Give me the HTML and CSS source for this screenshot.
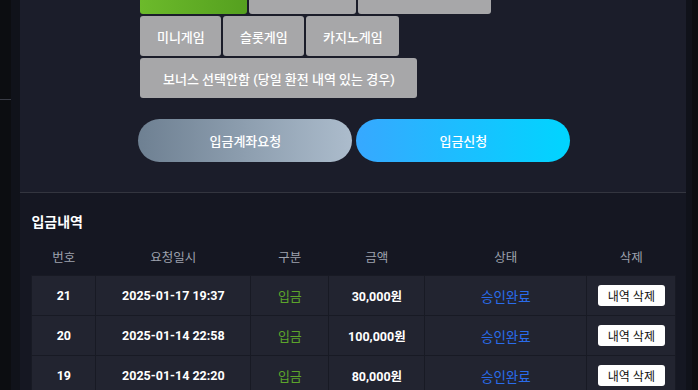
FILE: index.html
```html
<!DOCTYPE html>
<html lang="ko">
<head>
    <meta charset="UTF-8">
    <meta name="viewport" content="width=device-width, initial-scale=1.0">
    <title>입금신청</title>
    <link rel="stylesheet" href="styles.css">
</head>
<body>
<div class="layout">
    <div class="sidebar"><div class="sidebar-line"></div></div>
    <div class="gutter"></div>

    <div class="main">
        <!-- 입금 신청 폼 -->
        <div class="deposit-form">
            <div class="game-buttons">
                <div class="btn-row top">
                    <button class="game-btn active" style="width: 107px;">스포츠 (국내)</button>
                    <button class="game-btn" style="width: 107px;">스포츠 (해외)</button>
                    <button class="game-btn" style="width: 133px;">실시간 (라이브)</button>
                </div>
                <div class="btn-row">
                    <button class="game-btn" style="width: 81px;">미니게임</button>
                    <button class="game-btn" style="width: 81px;">슬롯게임</button>
                    <button class="game-btn" style="width: 93px;">카지노게임</button>
                </div>
                <div class="btn-row">
                    <button class="game-btn" style="width: 277px;">보너스 선택안함 (당일 환전 내역 있는 경우)</button>
                </div>
            </div>

            <div class="action-buttons">
                <button class="action-btn account">입금계좌요청</button>
                <button class="action-btn apply">입금신청</button>
            </div>
        </div>

        <!-- 입금 내역 -->
        <div class="history">
            <h3>입금내역</h3>
            <table class="history-table">
                <colgroup>
                    <col style="width: 64px;">
                    <col style="width: 155px;">
                    <col style="width: 78px;">
                    <col style="width: 96px;">
                    <col style="width: 162px;">
                    <col style="width: 89px;">
                </colgroup>
                <thead>
                    <tr>
                        <th>번호</th>
                        <th>요청일시</th>
                        <th>구분</th>
                        <th>금액</th>
                        <th>상태</th>
                        <th>삭제</th>
                    </tr>
                </thead>
                <tbody>
                    <tr>
                        <td class="num">21</td>
                        <td class="num">2025-01-17 19:37</td>
                        <td class="type">입금</td>
                        <td class="num">30,000원</td>
                        <td class="status">승인완료</td>
                        <td><button class="del-btn">내역 삭제</button></td>
                    </tr>
                    <tr>
                        <td class="num">20</td>
                        <td class="num">2025-01-14 22:58</td>
                        <td class="type">입금</td>
                        <td class="num">100,000원</td>
                        <td class="status">승인완료</td>
                        <td><button class="del-btn">내역 삭제</button></td>
                    </tr>
                    <tr>
                        <td class="num">19</td>
                        <td class="num">2025-01-14 22:20</td>
                        <td class="type">입금</td>
                        <td class="num">80,000원</td>
                        <td class="status">승인완료</td>
                        <td><button class="del-btn">내역 삭제</button></td>
                    </tr>
                </tbody>
            </table>
        </div>
    </div>

    <div class="rightbar"></div>
</div>
</body>
</html>
```

FILE: styles.css
```css
body {
    margin: 0;
    background-color: #0c0d11;
    font-family: Roboto, "Noto Sans CJK KR", sans-serif;
    color: #fff;
    overflow: hidden;
}
.layout {
    display: flex;
    min-height: 390px;
}
.sidebar {
    width: 11px;
    background-color: #0c0d11;
}
.sidebar-line {
    height: 1px;
    margin-top: 99px;
    background-color: #3a3c46;
}
.gutter {
    width: 10px;
    background-color: #10121a;
}
.main {
    flex: 1;
    background-color: #151722;
}
.rightbar {
    width: 12px;
    background: linear-gradient(to right, #10121a 50%, #0c0d11 50%);
}

/* 입금 신청 폼 */
.deposit-form {
    background-color: #1b1d2a;
    border-bottom: 1px solid #33353f;
    margin-top: -26px;
    padding-bottom: 30px;
}
.game-buttons {
    padding-left: 120px;
}
.btn-row {
    display: flex;
    gap: 2px;
    margin-bottom: 2px;
}
.btn-row:last-child {
    margin-bottom: 0;
}
.game-btn {
    height: 40px;
    padding: 0;
    border: none;
    border-radius: 3px;
    background-color: #a7a7a9;
    color: #fff;
    font-family: Roboto, "Noto Sans CJK KR", sans-serif;
    font-size: 13px;
    font-weight: 500;
    cursor: pointer;
}
.btn-row.top .game-btn {
    padding-bottom: 5px;
}
.game-btn.active {
    background: linear-gradient(to right, #6cba2b, #55a01f);
}
.action-buttons {
    display: flex;
    justify-content: center;
    gap: 4px;
    margin-top: 21px;
    padding-left: 2px;
}
.action-btn {
    width: 214px;
    height: 43px;
    border: none;
    border-radius: 22px;
    color: #fff;
    font-family: Roboto, "Noto Sans CJK KR", sans-serif;
    font-size: 13px;
    font-weight: 500;
    cursor: pointer;
}
.action-btn.account {
    background: linear-gradient(to right, #6e8092, #acbccc);
}
.action-btn.apply {
    background: linear-gradient(to right, #37a8ff, #00d5ff);
}

/* 입금 내역 */
.history {
    padding: 19px 10px 0 11px;
}
.history h3 {
    margin: 0 0 6px;
    font-size: 14px;
    font-weight: 700;
    line-height: 20px;
}
.history-table {
    width: 644px;
    border-collapse: collapse;
    table-layout: fixed;
}
.history-table th {
    height: 37px;
    padding: 0;
    color: #9ea2ae;
    font-size: 12.5px;
    font-weight: 400;
    text-align: center;
}
.history-table td {
    height: 39px;
    padding: 0;
    background-color: #222430;
    border: 1px solid #181a24;
    font-size: 13px;
    text-align: center;
}
.history-table thead th {
    border-bottom: 1px solid #181a24;
}
.history-table td.num {
    font-weight: 700;
    font-size: 12.5px;
}
.history-table td.type {
    color: #5ca42b;
}
.history-table td.status {
    color: #2a6ceb;
    font-size: 13.5px;
}
.del-btn {
    height: 21px;
    padding: 0 10px;
    border: none;
    border-radius: 3px;
    background-color: #fff;
    color: #111;
    font-family: Roboto, "Noto Sans CJK KR", sans-serif;
    font-size: 12px;
    cursor: pointer;
}
```
